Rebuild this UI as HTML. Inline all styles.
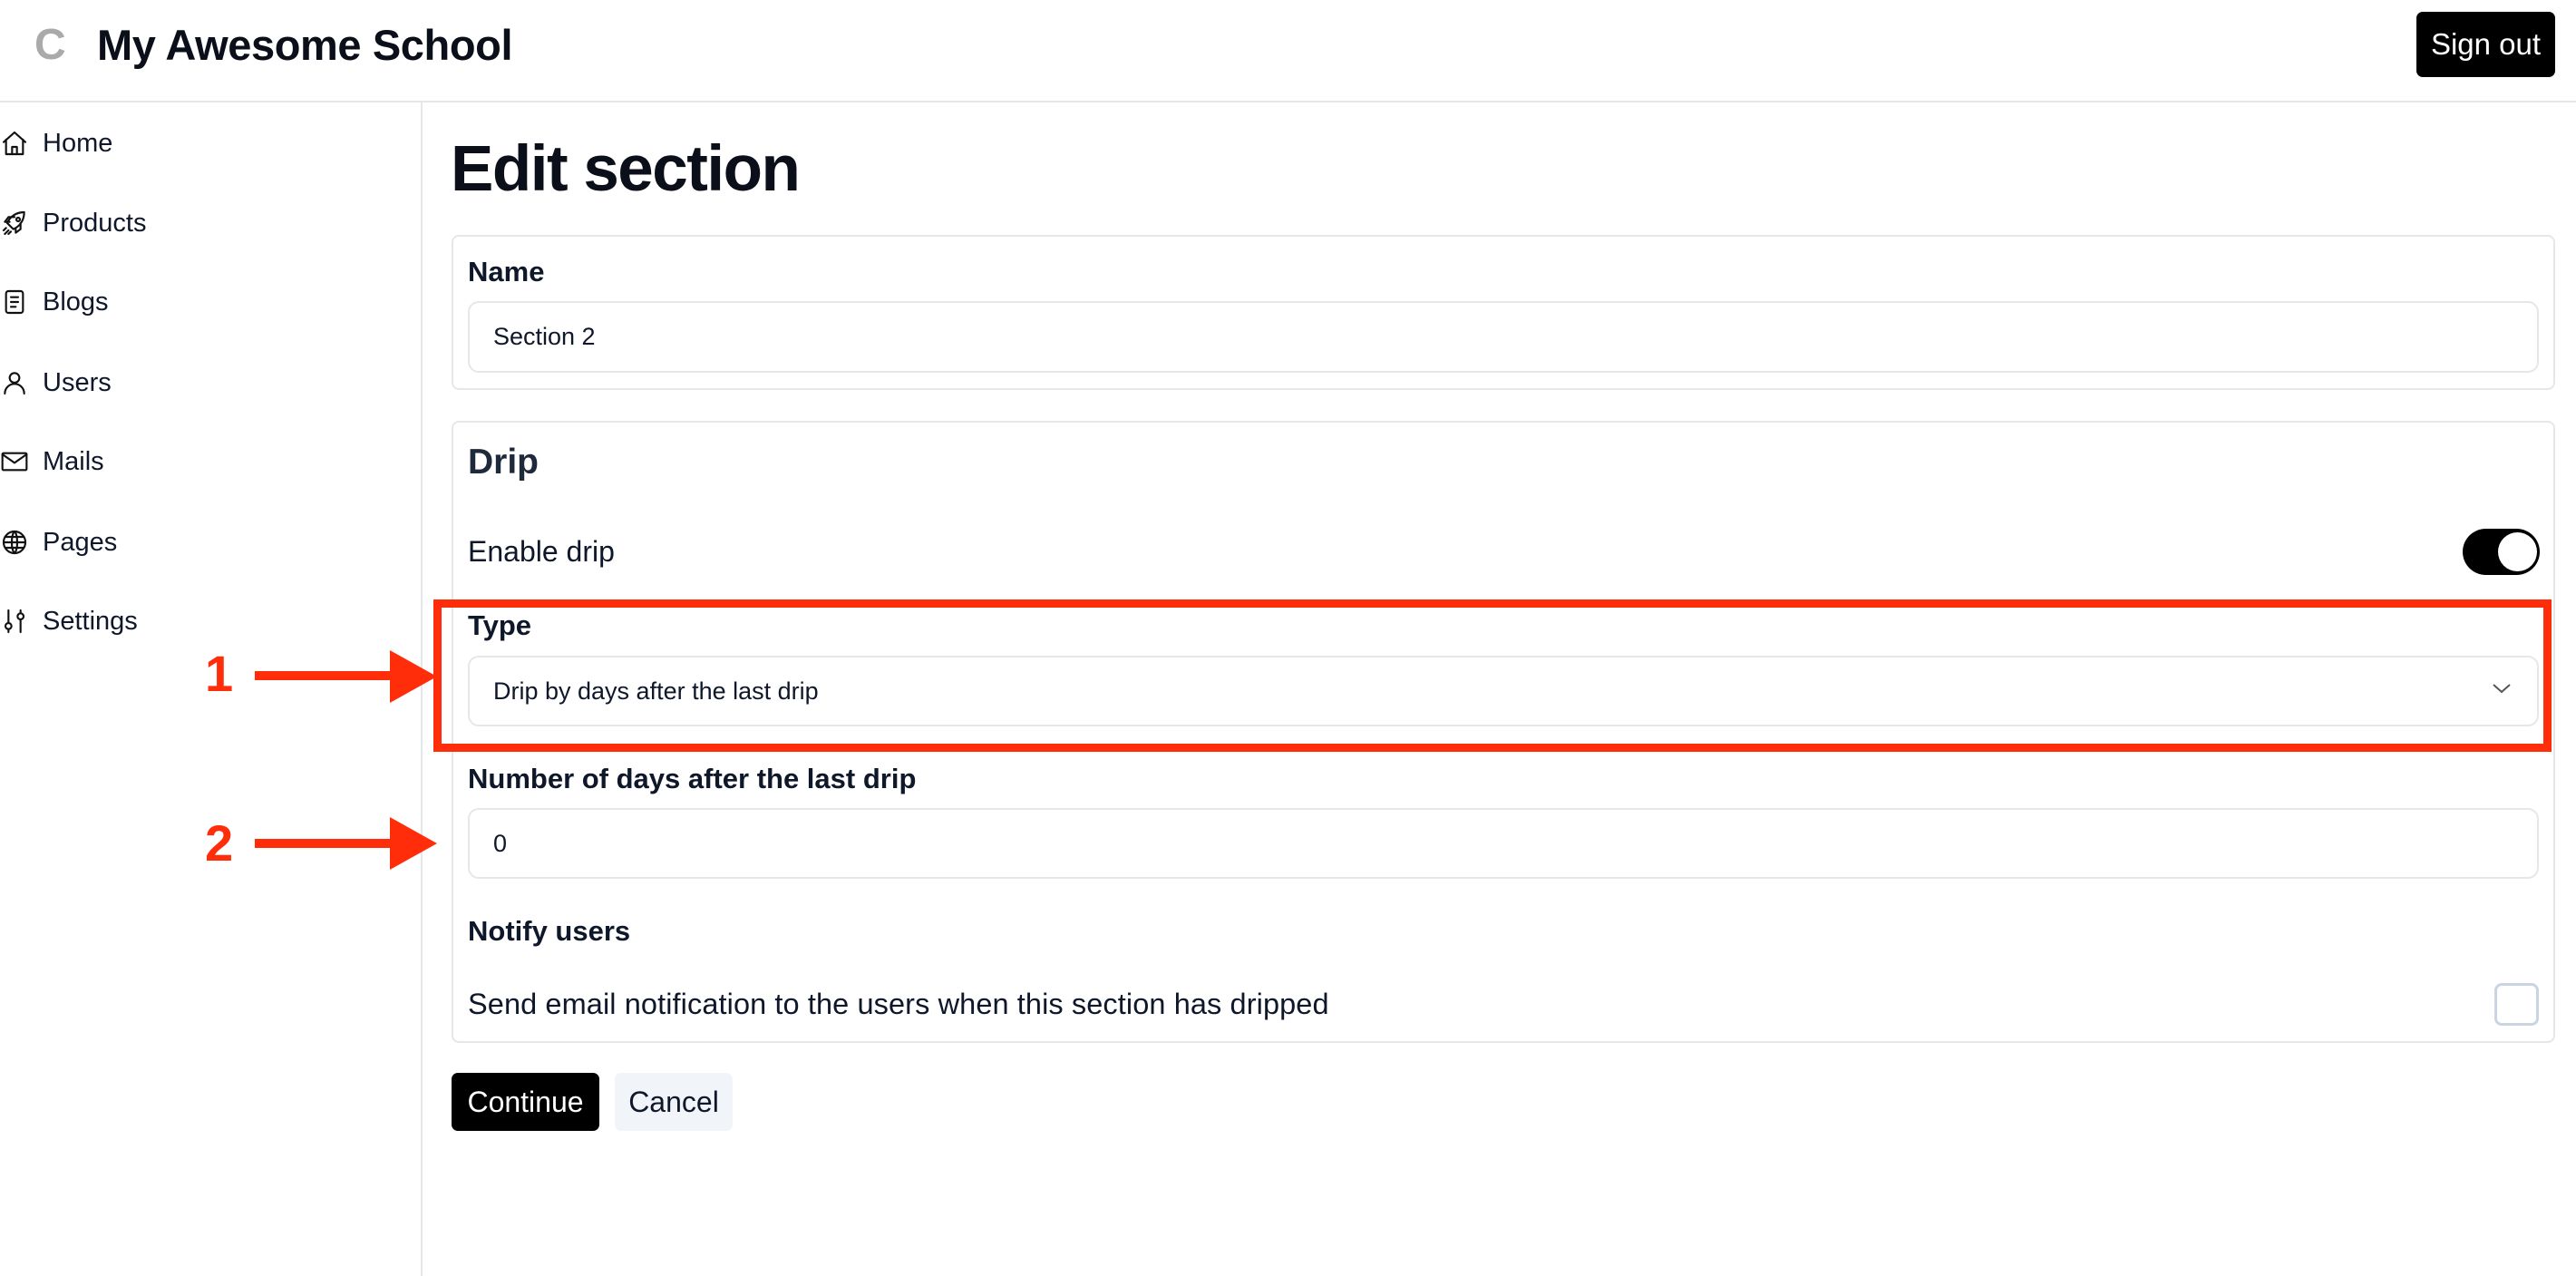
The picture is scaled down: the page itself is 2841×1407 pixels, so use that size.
<!DOCTYPE html>
<html><head><meta charset="utf-8"><style>
*{box-sizing:border-box;margin:0;padding:0}
body{width:2841px;height:1407px;background:#fff;font-family:"Liberation Sans",Arial,sans-serif;color:#0f172a;position:relative;overflow:hidden}
.a{position:absolute}
.hdr{left:0;top:0;width:2841px;height:113px;border-bottom:2px solid #e5e7eb}
.side{left:0;top:113px;width:466px;height:1294px;border-right:2px solid #e5e7eb}
.nav{left:0;font-size:29px;color:#0f172a;display:flex;align-items:center;height:40px}
.nav svg{width:32px;height:32px;margin:0 15px 0 0;fill:none;stroke:#111;stroke-width:1.6;stroke-linecap:round;stroke-linejoin:round}
.card{border:2px solid #e5e7eb;border-radius:8px}
.lbl{font-size:31px;font-weight:bold;left:516px}
.inp{left:516px;width:2284px;border:2px solid #e5e7eb;border-radius:12px;font-size:27px;padding-left:26px;display:flex;align-items:center}
.red{color:#ff2d0a;font-weight:bold;font-size:56px}
</style></head><body>
<div class="a hdr"></div>
<div class="a" style="left:38px;top:22px;font-size:48px;font-weight:bold;color:#aaa">C</div>
<div class="a" style="left:107px;top:22px;font-size:47px;font-weight:bold;color:#0b0f1a;letter-spacing:-0.4px">My Awesome School</div>
<div class="a" style="left:2665px;top:13px;width:153px;height:72px;background:#000;color:#fff;border-radius:7px;font-size:33px;display:flex;align-items:center;justify-content:center">Sign out</div>
<div class="a side"></div>

<div class="a nav" style="top:138px"><svg viewBox="0 0 24 24"><path d="M3 11L12 3l9 8M5 9v12h14V9M10 21v-6h4v6"/></svg>Home</div>
<div class="a nav" style="top:226px"><svg viewBox="0 0 24 24"><path d="M9 15l-3-3c2-5 7-9 14-9 0 7-4 12-9 14zM8 11H4l3-4h5M13 16v4l4-3v-5M5 16l-2 2M7 18l-3 3M9 19l-2 2"/><circle cx="15" cy="9" r="1.5"/></svg>Products</div>
<div class="a nav" style="top:313px"><svg viewBox="0 0 24 24"><rect x="5" y="3" width="14" height="18" rx="2"/><path d="M9 8h6M9 12h6M9 16h4"/></svg>Blogs</div>
<div class="a nav" style="top:402px"><svg viewBox="0 0 24 24"><circle cx="12" cy="8" r="4"/><path d="M4 21c0-5 4-8 8-8s8 3 8 8"/></svg>Users</div>
<div class="a nav" style="top:489px"><svg viewBox="0 0 24 24"><rect x="2" y="5" width="20" height="14" rx="1"/><path d="M2 6l10 7 10-7"/></svg>Mails</div>
<div class="a nav" style="top:578px"><svg viewBox="0 0 24 24"><circle cx="12" cy="12" r="9"/><path d="M3 12h18M12 3c-3 3-3 15 0 18M12 3c3 3 3 15 0 18M4.5 7.5h15M4.5 16.5h15"/></svg>Pages</div>
<div class="a nav" style="top:665px"><svg viewBox="0 0 24 24"><path d="M7 3v10M7 19v2M17 3v2M17 11v10"/><circle cx="7" cy="16" r="2.5"/><circle cx="17" cy="8" r="2.5"/></svg>Settings</div>

<div class="a" style="left:497px;top:146px;font-size:71px;font-weight:bold;color:#0b0f1a;letter-spacing:-1.5px">Edit section</div>

<div class="a card" style="left:498px;top:259px;width:2320px;height:171px"></div>
<div class="a lbl" style="top:282px">Name</div>
<div class="a inp" style="top:332px;height:79px">Section 2</div>

<div class="a card" style="left:498px;top:464px;width:2320px;height:686px"></div>
<div class="a" style="left:516px;top:488px;font-size:39px;font-weight:bold;color:#1e293b">Drip</div>
<div class="a" style="left:516px;top:590px;font-size:32px">Enable drip</div>
<div class="a" style="left:2716px;top:583px;width:85px;height:51px;background:#000;border-radius:26px"><div class="a" style="right:3px;top:4px;width:43px;height:43px;background:#fff;border-radius:50%"></div></div>

<div class="a" style="left:478px;top:661px;width:2336px;height:168px;border:9px solid #ff2d0a"></div>
<div class="a lbl" style="top:672px">Type</div>
<div class="a inp" style="top:723px;height:78px">Drip by days after the last drip</div>
<svg class="a" style="left:2748px;top:752px" width="22" height="14" viewBox="0 0 22 14"><path d="M2 3l9 8 9-8" fill="none" stroke="#555" stroke-width="2"/></svg>

<div class="a lbl" style="top:841px">Number of days after the last drip</div>
<div class="a inp" style="top:891px;height:78px">0</div>
<div class="a lbl" style="top:1009px">Notify users</div>
<div class="a" style="left:516px;top:1089px;font-size:32.5px;letter-spacing:0.1px">Send email notification to the users when this section has dripped</div>
<div class="a" style="left:2751px;top:1084px;width:49px;height:47px;border:3px solid #cbd5e1;border-radius:8px"></div>

<div class="a" style="left:498px;top:1183px;width:163px;height:64px;background:#000;color:#fff;border-radius:7px;font-size:32px;display:flex;align-items:center;justify-content:center">Continue</div>
<div class="a" style="left:678px;top:1183px;width:130px;height:64px;background:#f1f5f9;color:#0f172a;border-radius:7px;font-size:32px;display:flex;align-items:center;justify-content:center">Cancel</div>

<div class="a red" style="left:226px;top:710px">1</div>
<div class="a" style="left:281px;top:740px;width:155px;height:10px;background:#ff2d0a"></div>
<svg class="a" style="left:430px;top:717px" width="52" height="58"><polygon points="0,0 52,29 0,58" fill="#ff2d0a"/></svg>
<div class="a red" style="left:226px;top:897px">2</div>
<div class="a" style="left:281px;top:925px;width:155px;height:10px;background:#ff2d0a"></div>
<svg class="a" style="left:430px;top:901px" width="52" height="58"><polygon points="0,0 52,29 0,58" fill="#ff2d0a"/></svg>
</body></html>
